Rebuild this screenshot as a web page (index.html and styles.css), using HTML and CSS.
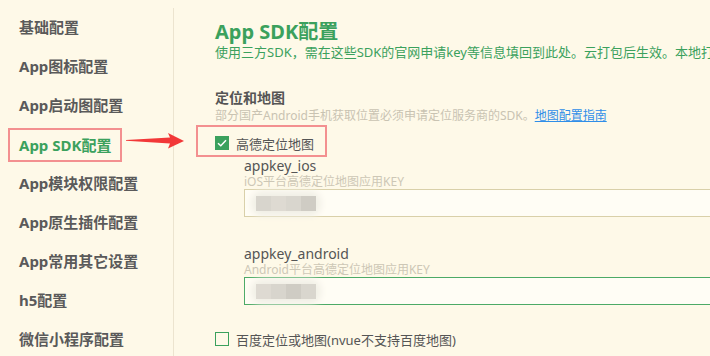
FILE: index.html
```html
<!DOCTYPE html>
<html lang="zh-CN">
  <head>
    <meta charset="UTF-8" />
    <title>App SDK配置</title>
    <link rel="stylesheet" href="styles.css">
  </head>
  <body>
    <div class="page">
      <ul class="sidebar">
        <li class="nav-item">基础配置</li>
        <li class="nav-item">App图标配置</li>
        <li class="nav-item">App启动图配置</li>
        <li class="nav-item active"><span class="mark nav-mark">App SDK配置</span></li>
        <li class="nav-item">App模块权限配置</li>
        <li class="nav-item">App原生插件配置</li>
        <li class="nav-item">App常用其它设置</li>
        <li class="nav-item">h5配置</li>
        <li class="nav-item">微信小程序配置</li>
      </ul>

      <div class="main">
        <h1 class="title">App SDK配置</h1>
        <p class="subtitle">使用三方SDK，需在这些SDK的官网申请key等信息填回到此处。云打包后生效。本地打包需在原生工程中配置。</p>

        <h2 class="section-title">定位和地图</h2>
        <p class="hint">部分国产Android手机获取位置必须申请定位服务商的SDK。<a href="#" class="link">地图配置指南</a></p>

        <div class="mark check-mark">
          <label class="check-row">
            <span class="checkbox checked">
              <svg width="10" height="8" viewBox="0 0 10 8"><path d="M1 4.2 L3.8 6.8 L9 1.2" fill="none" stroke="#fff" stroke-width="1.5"/></svg>
            </span>
            高德定位地图
          </label>
        </div>

        <div class="field">
          <div class="field-label">appkey_ios</div>
          <div class="field-hint">iOS平台高德定位地图应用KEY</div>
          <div class="input">
            <span class="blur"><i class="b1"></i><i class="b2"></i><i class="b3"></i><i class="b4"></i></span>
          </div>
        </div>

        <div class="field">
          <div class="field-label">appkey_android</div>
          <div class="field-hint">Android平台高德定位地图应用KEY</div>
          <div class="input focused">
            <span class="blur"><i class="b2"></i><i class="b1"></i><i class="b4"></i><i class="b3"></i></span>
          </div>
        </div>

        <div class="check-plain">
          <label class="check-row">
            <span class="checkbox"></span>
            百度定位或地图(nvue不支持百度地图)
          </label>
        </div>

        <div class="field tail">
          <div class="field-label">appkey_ios</div>
        </div>
      </div>

      <svg class="arrow" width="62" height="20" viewBox="124 131 62 20">
        <polygon points="126,140 170,137.5 168,133 184,141 168,148.5 170,143.5 126,140.8" fill="#f23838"/>
      </svg>
    </div>
  </body>
</html>
```

FILE: styles.css
```css
body {
  margin: 0;
  background: #fef9e8;
  font-family: "Noto Sans", "Noto Sans CJK SC", sans-serif;
  color: #5a5a5a;
  overflow: hidden;
}

.page {
  position: relative;
  display: flex;
  width: 710px;
  height: 356px;
  overflow: hidden;
}

.sidebar {
  list-style: none;
  margin: 8px 0 0;
  padding: 0;
  width: 173px;
  flex-shrink: 0;
  border-right: 1px solid #ece4cf;
}

.nav-item {
  display: flex;
  align-items: center;
  height: 39px;
  margin-top: -1px;
  margin-bottom: 1px;
  padding-left: 19px;
  font-size: 15px;
  font-weight: 700;
  white-space: nowrap;
}

.nav-item.active {
  color: #3ba15d;
}

.mark {
  border: 2px solid #f39090;
  box-sizing: border-box;
}

.nav-mark {
  display: inline-flex;
  align-items: center;
  height: 34px;
  margin-left: -11px;
  padding: 0 9px;
  margin-top: 2px;
}

.main {
  flex: 1;
  min-width: 0;
  padding-left: 41px;
  white-space: nowrap;
  overflow: hidden;
}

.title {
  margin: 20px 0 0;
  font-size: 20px;
  line-height: 24px;
  font-weight: 700;
  color: #3ba15d;
}

.subtitle {
  margin: 0;
  font-size: 13px;
  line-height: 16px;
  color: #3ba15d;
}

.section-title {
  margin: 28px 0 0;
  font-size: 14px;
  line-height: 20px;
  font-weight: 700;
  color: #555;
}

.hint {
  margin: 0;
  font-size: 12px;
  line-height: 16px;
  color: #c9c3b2;
}

.link {
  color: #2f8ee8;
}

.check-mark {
  display: inline-block;
  margin: 1px 0 0 -19px;
  padding: 0 11px 0 17px;
  height: 32px;
}

.check-plain {
  margin-top: 16px;
  height: 32px;
  padding-top: 2px;
  box-sizing: border-box;
}

.check-row {
  display: flex;
  align-items: center;
  gap: 7px;
  height: 28px;
  padding-top: 4px;
  box-sizing: border-box;
  font-size: 13px;
  color: #555;
}

.checkbox {
  display: inline-flex;
  align-items: center;
  justify-content: center;
  width: 14px;
  height: 14px;
  box-sizing: border-box;
  border: 1px solid #3ba15d;
}

.checkbox.checked {
  background: #3ba15d;
}

.field {
  padding-left: 29px;
}

.field + .field {
  margin-top: 28px;
}

.field.tail {
  margin-top: 2px;
}

.field-label {
  font-size: 14px;
  line-height: 17px;
  color: #555;
}

.field-hint {
  font-size: 12px;
  line-height: 15px;
  color: #cdc7b6;
}

.input {
  display: flex;
  align-items: center;
  width: 520px;
  height: 28px;
  box-sizing: border-box;
  border: 1px solid #d9d0a9;
  background: #fffdf5;
  padding-left: 11px;
}

.input.focused {
  border-color: #4caa66;
}

.blur {
  display: inline-flex;
  filter: blur(0.6px);
  box-shadow: 0 0 7px 5px #f1efe6;
  background: #f1efe6;
  border-radius: 6px;
}

.blur i {
  display: block;
  width: 15px;
  height: 15px;
}

.b1 { background: #d8d5cd; }
.b2 { background: #dedad2; }
.b3 { background: #d9d6ce; }
.b4 { background: #cfccc4; }

.arrow {
  position: absolute;
  left: 124px;
  top: 131px;
}
```
